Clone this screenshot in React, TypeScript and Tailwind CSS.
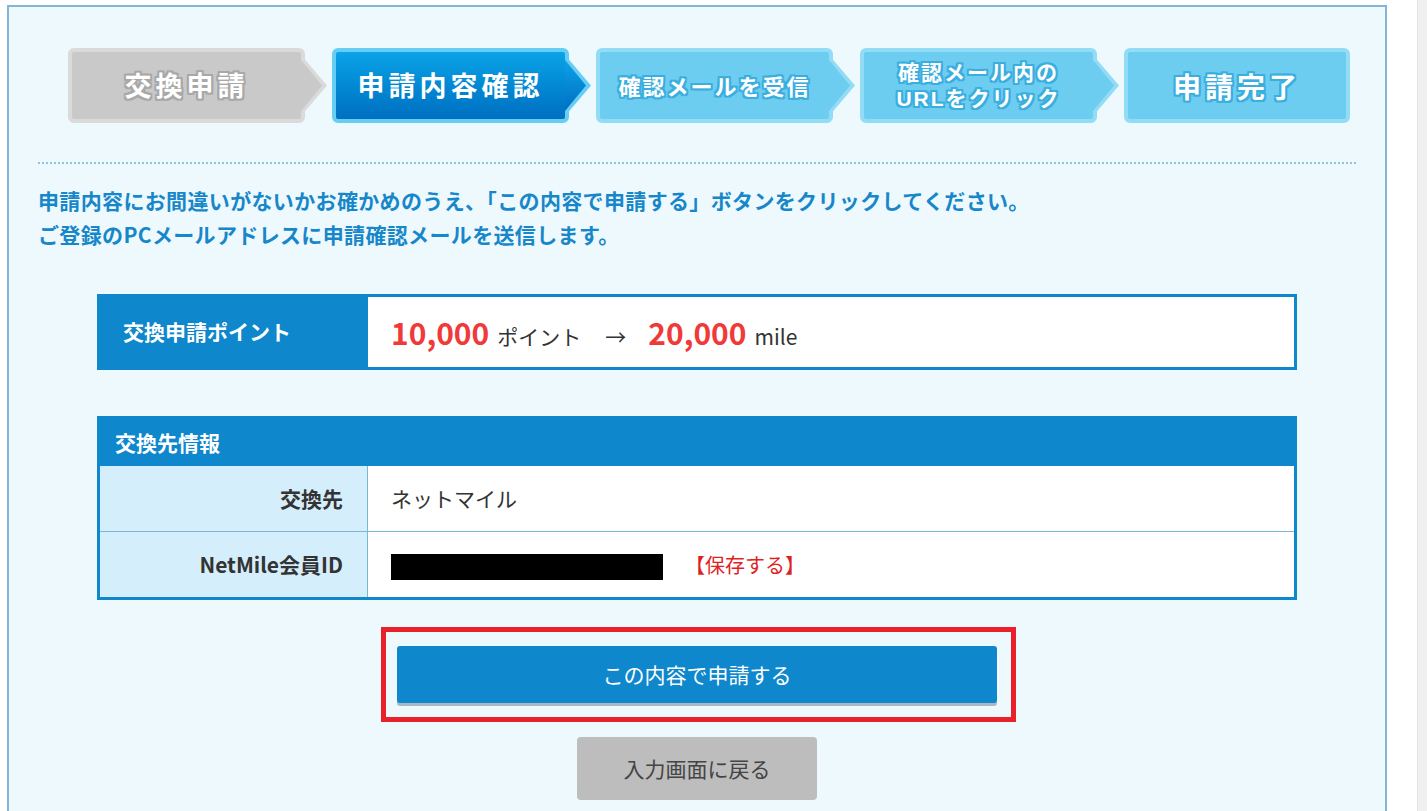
import React from 'react';

type Step = {
  label: React.ReactNode;
  box: string;
  text: string;
  width: string;
  fill: string;
  edge: string;
  arrow: boolean;
};

const GRAY_TEXT =
  'text-white [text-shadow:2px_0_0_#a8a8a8,-2px_0_0_#a8a8a8,0_2px_0_#a8a8a8,0_-2px_0_#a8a8a8,2px_2px_0_#a8a8a8,-2px_-2px_0_#a8a8a8,2px_-2px_0_#a8a8a8,-2px_2px_0_#a8a8a8]';
const LIGHT_TEXT =
  'text-white [text-shadow:2px_0_0_#3aaedf,-2px_0_0_#3aaedf,0_2px_0_#3aaedf,0_-2px_0_#3aaedf,2px_2px_0_#3aaedf,-2px_-2px_0_#3aaedf,2px_-2px_0_#3aaedf,-2px_2px_0_#3aaedf]';

const steps: Step[] = [
  {
    label: '交換申請',
    box: 'bg-[#c9c9c9] border-[#dadada]',
    text: `${GRAY_TEXT} text-[27px] tracking-[4px]`,
    width: 'w-[237px]',
    fill: '#c9c9c9',
    edge: '#dadada',
    arrow: true,
  },
  {
    label: '申請内容確認',
    box: 'bg-gradient-to-b from-[#0ca3e8] to-[#006fc0] border-[#66cdf4]',
    text: 'text-white text-[27px] tracking-[4px]',
    width: 'w-[237px]',
    fill: 'url(#activeFill)',
    edge: '#66cdf4',
    arrow: true,
  },
  {
    label: '確認メールを受信',
    box: 'bg-[#6ccdf0] border-[#93dcf6]',
    text: `${LIGHT_TEXT} text-[22px] tracking-[2px]`,
    width: 'w-[237px]',
    fill: '#6ccdf0',
    edge: '#93dcf6',
    arrow: true,
  },
  {
    label: (
      <>
        確認メール内の
        <br />
        URLをクリック
      </>
    ),
    box: 'bg-[#6ccdf0] border-[#93dcf6]',
    text: `${LIGHT_TEXT} block text-[21px] leading-[26px] tracking-[2px] font-['Liberation_Sans','Noto_Sans_CJK_JP',sans-serif]`,
    width: 'w-[237px]',
    fill: '#6ccdf0',
    edge: '#93dcf6',
    arrow: true,
  },
  {
    label: '申請完了',
    box: 'bg-[#6ccdf0] border-[#93dcf6]',
    text: `${LIGHT_TEXT} text-[28px] tracking-[4px]`,
    width: 'w-[226px]',
    fill: '#6ccdf0',
    edge: '#93dcf6',
    arrow: false,
  },
];

function StepArrow({ fill, edge }: { fill: string; edge: string }) {
  return (
    <svg width="27" height="75" viewBox="0 0 27 75" className="-ml-[4px] shrink-0">
      <defs>
        <linearGradient id="activeFill" x1="0" y1="0" x2="0" y2="1">
          <stop offset="0" stopColor="#0ca3e8" />
          <stop offset="1" stopColor="#006fc0" />
        </linearGradient>
      </defs>
      <polygon points="0,7 26,37.5 0,68" fill={edge} />
      <polygon points="0,12 21,37.5 0,63" fill={fill} />
    </svg>
  );
}

export default function App() {
  return (
    <div
      className="w-[1427px] h-[811px] overflow-hidden bg-white flex"
      style={{ fontFamily: '"Noto Sans CJK JP", "Liberation Sans", sans-serif' }}
    >
      {/* main panel */}
      <div className="ml-[7px] mt-[5px] w-[1380px] shrink-0 self-start border-2 border-[#82b6d5] bg-[#eef9fe] px-[29px] pt-[41px] pb-[60px]">
        {/* step flow */}
        <div className="flex ml-[30px]">
          {steps.map((s, i) => (
            <div key={i} className="flex items-center">
              <div
                className={`${s.width} h-[75px] shrink-0 rounded-[6px] border-4 flex items-center justify-center text-center font-bold ${s.box}`}
              >
                <span className={s.text}>{s.label}</span>
              </div>
              {s.arrow && (
                <>
                  <StepArrow fill={s.fill} edge={s.edge} />
                  <div className="w-[4px]" />
                </>
              )}
            </div>
          ))}
        </div>

        <div className="mt-[39px] border-t-2 border-dotted border-[#8cc6e0]" />

        {/* notice */}
        <p className="mt-[19px] text-[21px] leading-[34px] tracking-[0.35px] font-bold text-[#1787c9]">
          申請内容にお間違いがないかお確かめのうえ、「この内容で申請する」ボタンをクリックしてください。
          <br />
          ご登録のPCメールアドレスに申請確認メールを送信します。
        </p>

        {/* points */}
        <div className="mt-[43px] mx-auto w-[1200px] h-[76px] border-[3px] border-[#0e87cc] flex bg-white">
          <div className="w-[268px] shrink-0 bg-[#0e87cc] flex items-center pl-[23px] text-white font-bold text-[21px]">
            交換申請ポイント
          </div>
          <div className="flex-1 flex items-baseline self-center pl-[23px] text-[#333]">
            <span className="text-[30px] font-bold text-[#f03a3a]">10,000</span>
            <span className="ml-[8px] text-[21px]">ポイント</span>
            <span className="ml-[24px] text-[21px]">→</span>
            <span className="ml-[22px] text-[30px] font-bold text-[#f03a3a]">20,000</span>
            <span className="ml-[8px] text-[21px]">mile</span>
          </div>
        </div>

        {/* destination */}
        <div className="mt-[46px] mx-auto w-[1200px] border-[3px] border-[#0e87cc] bg-white">
          <div className="h-[47px] bg-[#0e87cc] flex items-center pl-[15px] text-white font-bold text-[21px]">
            交換先情報
          </div>
          <div className="flex h-[66px] border-b border-[#7ab8d8]">
            <div className="w-[268px] shrink-0 bg-[#d5eefb] border-r border-[#7ab8d8] flex items-center justify-end pr-[24px] font-bold text-[21px] text-[#333]">
              交換先
            </div>
            <div className="flex-1 flex items-center pl-[23px] text-[21px] text-[#333]">ネットマイル</div>
          </div>
          <div className="flex h-[65px]">
            <div className="w-[268px] shrink-0 bg-[#d5eefb] border-r border-[#7ab8d8] flex items-center justify-end pr-[24px] font-bold text-[21px] text-[#333]">
              NetMile会員ID
            </div>
            <div className="flex-1 flex items-center pl-[23px]">
              <div className="w-[272px] h-[26px] bg-black mt-[4px]" />
              <span className="ml-[22px] text-[20px] text-[#e01f1f]">【保存する】</span>
            </div>
          </div>
        </div>

        {/* actions */}
        <div className="mt-[27px] ml-[343px] w-[635px] h-[95px] border-[5px] border-[#e8212b] pl-[11px] pt-[14px]">
          <button className="w-[600px] h-[57px] rounded-[3px] bg-[#0e87cc] shadow-[0_3px_0_#a7b8c8] text-white text-[21px]">
            この内容で申請する
          </button>
        </div>
        <div className="mt-[15px] flex justify-center">
          <button className="w-[240px] h-[63px] rounded-[4px] bg-[#bdbdbd] text-[#444] text-[21px]">
            入力画面に戻る
          </button>
        </div>
      </div>

      {/* scrollbar */}
      <div className="ml-auto w-[10px] h-full bg-[#f0f0f0] border-l border-[#e4e4e4]" />
    </div>
  );
}
